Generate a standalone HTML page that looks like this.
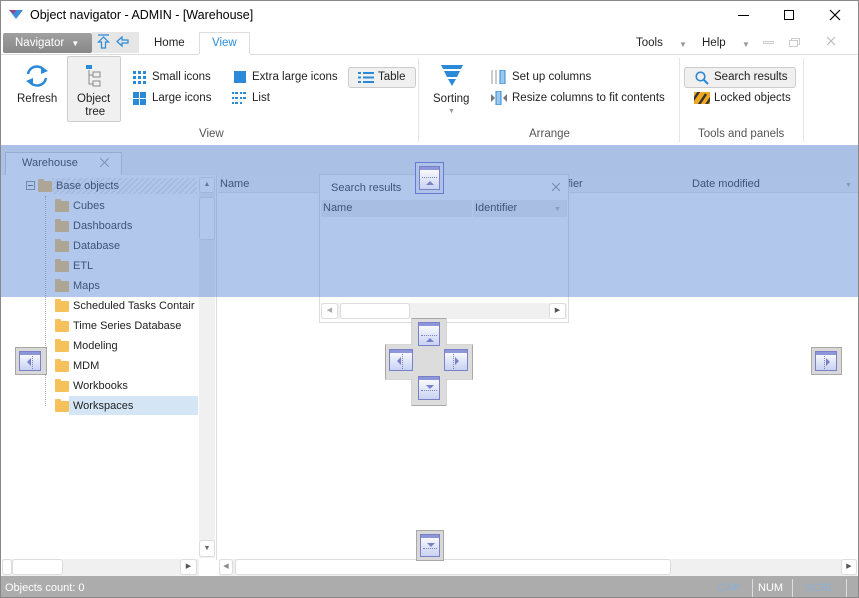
<!DOCTYPE html>
<html><head><meta charset="utf-8"><style>
*{box-sizing:border-box;margin:0;padding:0}
body{width:859px;height:598px;overflow:hidden;font-family:"Liberation Sans",sans-serif;font-size:11px;line-height:16px;color:#222;background:#fff;position:relative}
.a{position:absolute;white-space:nowrap}
.fold{position:absolute;width:14px;height:11px;background:#f6c05a;border-radius:1px}
.fold:before{content:"";position:absolute;left:0;top:-2px;width:6px;height:3px;background:#f6c05a;border-radius:1px 1px 0 0}
.guide{position:absolute;background:#d8d8d8;border:1px solid #a8a8a8}
.gi{position:absolute;background:linear-gradient(#fff,#c8d2f2);border:1px solid #7a80c8}
.gi:before{content:"";position:absolute;left:0;right:0;top:0;height:3px;background:#8c96d8}
.tri{position:absolute;width:0;height:0}
.sb{position:absolute;background:#f0f0f0}
.sbt{position:absolute;background:#fff;border:1px solid #ddd;border-radius:3px}
</style></head><body>
<div class="a" style="left:0;top:0;width:859px;height:598px;border:1px solid #888;z-index:50;pointer-events:none"></div>
<!-- title -->
<svg class="a" style="left:9px;top:10px" width="14" height="10"><polygon points="0,0 14,0 7,9" fill="#3a8fd8"/><polygon points="0,0 7,0 5,4" fill="#a04080"/></svg>
<div class="a" style="left:30px;top:7px;font-size:12.5px;color:#000">Object navigator - ADMIN - [Warehouse]</div>
<div class="a" style="left:738px;top:15px;width:11px;height:1px;background:#000"></div>
<div class="a" style="left:784px;top:10px;width:10px;height:10px;border:1px solid #000"></div>
<svg class="a" style="left:829px;top:9px" width="12" height="12"><path d="M1 1L11 11M11 1L1 11" stroke="#000" stroke-width="1.2"/></svg>
<!-- tabs row -->
<div class="a" style="left:3px;top:33px;width:89px;height:20px;background:linear-gradient(#a0a0a0,#888);border-radius:2px;color:#fff;padding:2px 0 0 12px;font-size:11.5px">Navigator <span style="font-size:8px;margin-left:4px">▼</span></div>
<div class="a" style="left:92px;top:32px;width:47px;height:21px;background:#e6e6e6"></div>
<svg class="a" style="left:96px;top:34px" width="40" height="16"><path d="M2 1H13M7.5 3L2.5 8H5.5V14H9.5V8H12.5Z" fill="none" stroke="#2b8ad8" stroke-width="1.2"/><path d="M21 7.5L26 3V6H32V9H26V12Z" fill="none" stroke="#2b8ad8" stroke-width="1.2"/></svg>
<div class="a" style="left:154px;top:35px;font-size:11.5px">Home</div>
<div class="a" style="left:199px;top:32px;width:51px;height:23px;background:#fff;border:1px solid #ddd;border-bottom:none"></div>
<div class="a" style="left:212px;top:35px;font-size:11.5px;color:#2b8ad8">View</div>
<div class="a" style="left:0;top:54px;width:859px;height:1px;background:#ddd"></div>
<div class="a" style="left:199px;top:54px;width:51px;height:1px;background:#fff"></div>
<div class="a" style="left:636px;top:35px;font-size:11.5px">Tools</div>
<div class="a" style="left:679px;top:37px;font-size:8px;color:#999">▼</div>
<div class="a" style="left:702px;top:35px;font-size:11.5px">Help</div>
<div class="a" style="left:742px;top:37px;font-size:8px;color:#999">▼</div>
<div class="a" style="left:763px;top:41px;width:11px;height:3px;border:1px solid #ccc;border-radius:1px"></div>
<div class="a" style="left:791px;top:38px;width:9px;height:7px;border:1px solid #ccc"></div>
<div class="a" style="left:789px;top:40px;width:9px;height:7px;border:1px solid #ccc;background:#fff"></div>
<svg class="a" style="left:826px;top:36px" width="10" height="10"><path d="M1 1L9 9M9 1L1 9" stroke="#bbb" stroke-width="1.2"/></svg>
<!-- ribbon -->
<svg class="a" style="left:24px;top:63px" width="26" height="26"><path d="M4 11A9 9 0 0 1 20 7" fill="none" stroke="#2b8ad8" stroke-width="2.5"/><polygon points="17,3 24,8 17,11" fill="#2b8ad8"/><path d="M22 15A9 9 0 0 1 6 19" fill="none" stroke="#2b8ad8" stroke-width="2.5"/><polygon points="9,23 2,18 9,15" fill="#2b8ad8"/></svg>
<div class="a" style="left:17px;top:91px;font-size:11.5px">Refresh</div>
<div class="a" style="left:67px;top:56px;width:54px;height:66px;background:#f0f0f0;border:1px solid #ccc;border-radius:2px"></div>
<svg class="a" style="left:84px;top:64px" width="20" height="24"><rect x="2" y="1" width="6" height="4" fill="#2b8ad8"/><path d="M5 6V20H9M5 11H9" fill="none" stroke="#888"/><rect x="9" y="8" width="7" height="5" fill="none" stroke="#888"/><rect x="9" y="17" width="7" height="5" fill="none" stroke="#888"/></svg>
<div class="a" style="left:77px;top:93px;font-size:11.5px;text-align:center;line-height:13px">Object<br>&nbsp;tree</div>
<svg class="a" style="left:133px;top:71px" width="13" height="13"><g fill="#2b8ad8"><rect x="0" y="0" width="3" height="3"/><rect x="5" y="0" width="3" height="3"/><rect x="10" y="0" width="3" height="3"/><rect x="0" y="5" width="3" height="3"/><rect x="5" y="5" width="3" height="3"/><rect x="10" y="5" width="3" height="3"/><rect x="0" y="10" width="3" height="3"/><rect x="5" y="10" width="3" height="3"/><rect x="10" y="10" width="3" height="3"/></g></svg>
<div class="a" style="left:152px;top:69px;font-size:11.5px">Small icons</div>
<svg class="a" style="left:133px;top:92px" width="13" height="13"><g fill="#2b8ad8"><rect x="0" y="0" width="6" height="6"/><rect x="7" y="0" width="6" height="6"/><rect x="0" y="7" width="6" height="6"/><rect x="7" y="7" width="6" height="6"/></g></svg>
<div class="a" style="left:152px;top:90px;font-size:11.5px">Large icons</div>
<div class="a" style="left:234px;top:71px;width:12px;height:12px;background:#2b8ad8"></div>
<div class="a" style="left:252px;top:69px;font-size:11.5px">Extra large icons</div>
<svg class="a" style="left:232px;top:92px" width="14" height="12"><g fill="#2b8ad8"><rect x="0" y="0" width="2" height="2"/><rect x="3" y="0" width="3" height="2"/><rect x="0" y="5" width="2" height="2"/><rect x="3" y="5" width="3" height="2"/><rect x="0" y="10" width="2" height="2"/><rect x="3" y="10" width="3" height="2"/><rect x="8" y="0" width="2" height="2"/><rect x="11" y="0" width="3" height="2"/><rect x="8" y="5" width="2" height="2"/><rect x="11" y="5" width="3" height="2"/><rect x="8" y="10" width="2" height="2"/></g></svg>
<div class="a" style="left:252px;top:90px;font-size:11.5px">List</div>
<div class="a" style="left:348px;top:67px;width:68px;height:21px;background:#f0f0f0;border:1px solid #ccc;border-radius:3px"></div>
<svg class="a" style="left:358px;top:72px" width="16" height="11"><g fill="#2b8ad8"><rect x="0" y="0" width="3" height="2"/><rect x="5" y="0" width="11" height="2"/><rect x="0" y="4.5" width="3" height="2"/><rect x="5" y="4.5" width="11" height="2"/><rect x="0" y="9" width="3" height="2"/><rect x="5" y="9" width="11" height="2"/></g></svg>
<div class="a" style="left:378px;top:69px;font-size:11.5px">Table</div>
<div class="a" style="left:199px;top:126px;font-size:11.5px;color:#555">View</div>
<div class="a" style="left:418px;top:58px;width:1px;height:84px;background:#e6e6e6"></div>
<svg class="a" style="left:441px;top:65px" width="22" height="22"><polygon points="0,0 22,0 20,4 2,4" fill="#2b8ad8"/><polygon points="3,6 19,6 16,12 6,12" fill="#2b8ad8"/><polygon points="7,14 15,14 11,21" fill="#2b8ad8"/></svg>
<div class="a" style="left:433px;top:91px;font-size:11.5px">Sorting</div>
<div class="a" style="left:448px;top:104px;font-size:7px;color:#999">▼</div>
<svg class="a" style="left:491px;top:70px" width="16" height="14"><path d="M1 0V14M5 0V14" stroke="#999"/><rect x="9" y="0" width="5" height="14" fill="#9cc8ec" stroke="#2b8ad8"/></svg>
<div class="a" style="left:512px;top:69px;font-size:11.5px">Set up columns</div>
<svg class="a" style="left:491px;top:91px" width="18" height="14"><polygon points="0,3 4,7 0,11" fill="#777"/><rect x="5" y="0" width="5" height="14" fill="#9cc8ec" stroke="#2b8ad8"/><polygon points="16,3 12,7 16,11" fill="#777"/></svg>
<div class="a" style="left:512px;top:90px;font-size:11.5px">Resize columns to fit contents</div>
<div class="a" style="left:529px;top:126px;font-size:11.5px;color:#555">Arrange</div>
<div class="a" style="left:679px;top:58px;width:1px;height:84px;background:#e6e6e6"></div>
<div class="a" style="left:684px;top:67px;width:112px;height:21px;background:#f0f0f0;border:1px solid #ccc;border-radius:3px"></div>
<svg class="a" style="left:695px;top:71px" width="14" height="14"><circle cx="5.5" cy="5.5" r="4.3" fill="none" stroke="#2b8ad8" stroke-width="1.6"/><path d="M8.5 8.5L13 13" stroke="#2b8ad8" stroke-width="2"/></svg>
<div class="a" style="left:714px;top:69px;font-size:11.5px">Search results</div>
<svg class="a" style="left:694px;top:92px" width="16" height="12"><rect width="16" height="12" fill="#f0a820"/><path d="M-2 10L6 -2M4 14L12 2M10 16L18 4" stroke="#333" stroke-width="2.4"/></svg>
<div class="a" style="left:714px;top:90px;font-size:11.5px">Locked objects</div>
<div class="a" style="left:698px;top:126px;font-size:11.5px;color:#555">Tools and panels</div>
<div class="a" style="left:803px;top:58px;width:1px;height:84px;background:#e6e6e6"></div>
<!-- workspace -->
<div class="a" style="left:0;top:145px;width:859px;height:30px;background:#f2f2f2"></div>
<div class="a" style="left:5px;top:152px;width:117px;height:24px;background:#fff;border:1px solid #ccc;border-bottom:none"></div>
<div class="a" style="left:22px;top:155px;font-size:11px">Warehouse</div>
<svg class="a" style="left:100px;top:158px" width="9" height="9"><path d="M0 0L9 9M9 0L0 9" stroke="#999"/></svg>
<!-- tree -->
<div class="a" style="left:0;top:175px;width:217px;height:385px;background:#fff;border-right:1px solid #ddd"></div>
<div class="a" style="left:52px;top:178px;width:145px;height:16px;background:repeating-linear-gradient(135deg,#e8e8e8 0 2px,#fff 2px 4px)"></div>
<div class="a" style="left:26px;top:181px;width:9px;height:9px;border:1px solid #888;background:#fff"></div>
<div class="a" style="left:28px;top:185px;width:5px;height:1px;background:#555"></div>
<div class="a" style="left:45px;top:196px;width:1px;height:210px;border-left:1px dotted #aaa"></div>
<div class="fold" style="left:38px;top:181px"></div>
<div class="a" style="left:56px;top:178px;font-size:11px">Base objects</div>
<div class="a" style="left:69px;top:396px;width:129px;height:19px;background:#d4e6f6"></div>
<div class="fold" style="left:55px;top:201px"></div><div class="a" style="left:73px;top:198px">Cubes</div>
<div class="fold" style="left:55px;top:221px"></div><div class="a" style="left:73px;top:218px">Dashboards</div>
<div class="fold" style="left:55px;top:241px"></div><div class="a" style="left:73px;top:238px">Database</div>
<div class="fold" style="left:55px;top:261px"></div><div class="a" style="left:73px;top:258px">ETL</div>
<div class="fold" style="left:55px;top:281px"></div><div class="a" style="left:73px;top:278px">Maps</div>
<div class="fold" style="left:55px;top:301px"></div><div class="a" style="left:73px;top:298px">Scheduled Tasks Contair</div>
<div class="fold" style="left:55px;top:321px"></div><div class="a" style="left:73px;top:318px">Time Series Database</div>
<div class="fold" style="left:55px;top:341px"></div><div class="a" style="left:73px;top:338px">Modeling</div>
<div class="fold" style="left:55px;top:361px"></div><div class="a" style="left:73px;top:358px">MDM</div>
<div class="fold" style="left:55px;top:381px"></div><div class="a" style="left:73px;top:378px">Workbooks</div>
<div class="fold" style="left:55px;top:401px"></div><div class="a" style="left:73px;top:398px">Workspaces</div>
<div class="sb" style="left:199px;top:177px;width:16px;height:381px"></div>
<div class="sbt" style="left:199px;top:177px;width:16px;height:16px;font-size:7px;text-align:center;color:#666;line-height:14px">▲</div>
<div class="sbt" style="left:199px;top:197px;width:16px;height:43px"></div>
<div class="sbt" style="left:199px;top:540px;width:16px;height:17px;font-size:7px;text-align:center;color:#666;line-height:15px">▼</div>
<div class="sb" style="left:2px;top:559px;width:197px;height:17px"></div>
<div class="sbt" style="left:2px;top:559px;width:10px;height:16px"></div>
<div class="sbt" style="left:12px;top:559px;width:51px;height:16px"></div>
<div class="sbt" style="left:180px;top:559px;width:17px;height:16px;font-size:7px;text-align:center;line-height:14px;color:#555">▶</div>
<!-- grid -->
<div class="a" style="left:218px;top:175px;width:641px;height:18px;background:#f4f4f4;border-bottom:1px solid #e4e4e4"></div>
<div class="a" style="left:220px;top:176px">Name</div>
<div class="a" style="left:565px;top:176px">ifier</div>
<div class="a" style="left:692px;top:176px">Date modified</div>
<div class="a" style="left:845px;top:178px;font-size:7px;color:#aaa">▼</div>
<div class="sb" style="left:219px;top:559px;width:638px;height:17px"></div>
<div class="sbt" style="left:219px;top:559px;width:14px;height:16px;font-size:7px;text-align:center;line-height:14px;color:#888">◀</div>
<div class="sbt" style="left:235px;top:559px;width:436px;height:16px"></div>
<div class="sbt" style="left:841px;top:559px;width:16px;height:16px;font-size:7px;text-align:center;line-height:14px;color:#555">▶</div>
<!-- search results panel -->
<div class="a" style="left:319px;top:174px;width:250px;height:149px;background:#fff;border:1px solid #ddd"></div>
<div class="a" style="left:331px;top:180px;font-size:11px">Search results</div>
<svg class="a" style="left:552px;top:183px" width="8" height="8"><path d="M0 0L8 8M8 0L0 8" stroke="#888"/></svg>
<div class="a" style="left:321px;top:200px;width:246px;height:17px;background:#eee"></div>
<div class="a" style="left:323px;top:200px">Name</div>
<div class="a" style="left:472px;top:200px;width:1px;height:17px;background:#fff"></div>
<div class="a" style="left:475px;top:200px">Identifier</div>
<div class="a" style="left:554px;top:202px;font-size:7px;color:#aaa">▼</div>
<div class="sb" style="left:321px;top:303px;width:246px;height:16px"></div>
<div class="sbt" style="left:321px;top:303px;width:17px;height:16px;font-size:7px;text-align:center;line-height:14px;color:#aaa">◀</div>
<div class="sbt" style="left:340px;top:303px;width:70px;height:16px"></div>
<div class="sbt" style="left:549px;top:303px;width:17px;height:16px;font-size:7px;text-align:center;line-height:14px;color:#555">▶</div>
<!-- overlay -->
<div class="a" style="left:0;top:145px;width:859px;height:152px;background:rgba(95,138,215,0.48)"></div>
<!-- dock guides -->
<div class="guide" style="left:415px;top:162px;width:29px;height:32px;background:#aec3e8;border-color:#6a7ad0"><div class="gi" style="left:3px;top:3px;width:21px;height:24px"><div class="a" style="left:2px;top:10px;width:15px;border-top:1px dotted #7a80c8"></div><div class="tri" style="left:6px;top:14px;border:4px solid transparent;border-bottom:4px solid #7a80c8;border-top:none"></div></div></div>
<div class="a" style="left:385px;top:318px;width:88px;height:88px;clip-path:polygon(30% 0,70% 0,70% 30%,100% 30%,100% 70%,70% 70%,70% 100%,30% 100%,30% 70%,0 70%,0 30%,30% 30%);background:#a8a8a8"></div>
<div class="a" style="left:386px;top:319px;width:86px;height:86px;clip-path:polygon(30% 0,70% 0,70% 30%,100% 30%,100% 70%,70% 70%,70% 100%,30% 100%,30% 70%,0 70%,0 30%,30% 30%);background:#dcdcdc"></div>
<div class="gi" style="left:418px;top:322px;width:22px;height:24px"><div class="a" style="left:2px;top:12px;width:16px;border-top:1px dotted #7a80c8"></div><div class="tri" style="left:7px;top:15px;border:4px solid transparent;border-bottom:4px solid #7a80c8;border-top:none"></div></div>
<div class="gi" style="left:418px;top:376px;width:22px;height:24px"><div class="a" style="left:2px;top:13px;width:16px;border-top:1px dotted #7a80c8"></div><div class="tri" style="left:7px;top:8px;border:4px solid transparent;border-top:4px solid #7a80c8;border-bottom:none"></div></div>
<div class="gi" style="left:389px;top:349px;width:24px;height:22px"><div class="a" style="left:12px;top:4px;height:15px;border-left:1px dotted #7a80c8"></div><div class="tri" style="left:7px;top:7px;border:4px solid transparent;border-right:4px solid #7a80c8;border-left:none"></div></div>
<div class="gi" style="left:444px;top:349px;width:24px;height:22px"><div class="a" style="left:8px;top:4px;height:15px;border-left:1px dotted #7a80c8"></div><div class="tri" style="left:10px;top:7px;border:4px solid transparent;border-left:4px solid #7a80c8;border-right:none"></div></div>
<div class="guide" style="left:15px;top:347px;width:32px;height:28px"><div class="gi" style="left:3px;top:3px;width:22px;height:20px"><div class="a" style="left:12px;top:4px;height:13px;border-left:1px dotted #7a80c8"></div><div class="tri" style="left:7px;top:6px;border:4px solid transparent;border-right:4px solid #7a80c8;border-left:none"></div></div></div>
<div class="guide" style="left:811px;top:347px;width:31px;height:28px"><div class="gi" style="left:3px;top:3px;width:22px;height:20px"><div class="a" style="left:8px;top:4px;height:13px;border-left:1px dotted #7a80c8"></div><div class="tri" style="left:10px;top:6px;border:4px solid transparent;border-left:4px solid #7a80c8;border-right:none"></div></div></div>
<div class="guide" style="left:416px;top:530px;width:28px;height:31px"><div class="gi" style="left:3px;top:3px;width:20px;height:23px"><div class="a" style="left:2px;top:13px;width:14px;border-top:1px dotted #7a80c8"></div><div class="tri" style="left:6px;top:8px;border:4px solid transparent;border-top:4px solid #7a80c8;border-bottom:none"></div></div></div>
<!-- status -->
<div class="a" style="left:0;top:576px;width:859px;height:22px;background:#acacac"></div>
<div class="a" style="left:5px;top:580px;color:#fff;font-size:11px">Objects count: 0</div>
<div class="a" style="left:718px;top:580px;color:#8ab0d8">CAP</div>
<div class="a" style="left:752px;top:579px;width:1px;height:18px;background:#ddd"></div>
<div class="a" style="left:758px;top:580px;color:#fff">NUM</div>
<div class="a" style="left:792px;top:579px;width:1px;height:18px;background:#ddd"></div>
<div class="a" style="left:805px;top:580px;color:#8ab0d8">SCRL</div>
<div class="a" style="left:846px;top:579px;width:1px;height:18px;background:#ddd"></div>
</body></html>
